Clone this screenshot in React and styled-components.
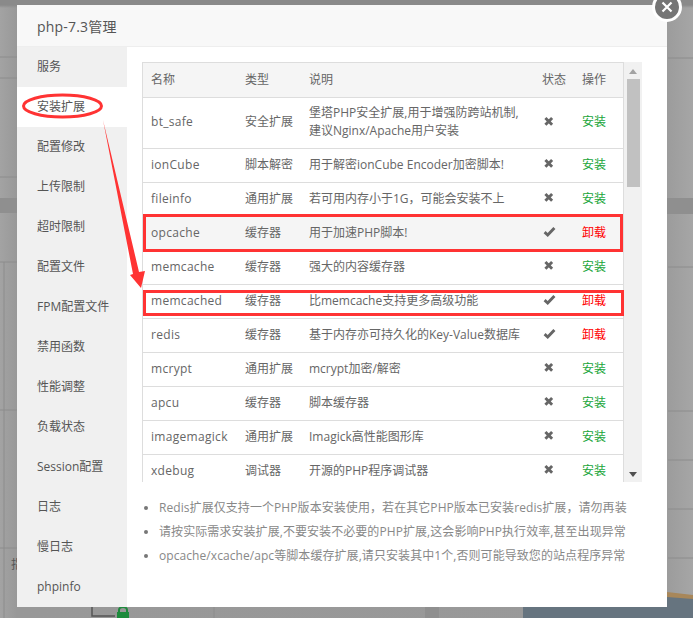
import React from 'react'
import styled, { createGlobalStyle } from 'styled-components'

const GlobalStyle = createGlobalStyle`
  html, body {
    margin: 0;
    padding: 0;
    background: #9c9c9c;
  }
  * {
    box-sizing: border-box;
  }
`

const Page = styled.div`
  position: relative;
  width: 693px;
  height: 618px;
  overflow: hidden;
  padding: 5px 0 0 17px;
  font-family: "Open Sans", "Noto Sans CJK SC", sans-serif;
  font-size: 12px;
  background:
    linear-gradient(180deg, #8a8a8a 0, #8a8a8a 5px, transparent 8px),
    linear-gradient(90deg, #a3a3a3 0, #989898 17px, #999 660px, #a6a6a6 693px);
`

const Backdrop = styled.svg`
  position: absolute;
  left: 0;
  top: 0;
`

const BehindText = styled.span`
  position: absolute;
  left: 11px;
  top: 557px;
  font-size: 12px;
  line-height: 16px;
  color: #555;
`

const Modal = styled.div`
  position: relative;
  width: 650px;
  height: 602px;
  background: #fff;
  display: flex;
  flex-direction: column;
`

const TitleBar = styled.div`
  height: 42px;
  flex: none;
  padding-left: 20px;
  line-height: 43px;
  font-size: 14px;
  letter-spacing: 0.2px;
  color: #555;
  background: #f8f8f8;
  border-bottom: 1px solid #eee;
`

const Body = styled.div`
  flex: 1;
  display: flex;
  min-height: 0;
`

const Sidebar = styled.ul`
  width: 110px;
  flex: none;
  margin: 0;
  padding: 0;
  list-style: none;
  background: #f0f0f0;
`

const NavItem = styled.li`
  height: 40px;
  line-height: 40px;
  padding-left: 20px;
  color: #555;
  background: ${p => (p.$active ? '#fff' : 'transparent')};
`

const Content = styled.div`
  flex: 1;
  padding: 15px 25px 0 15px;
`

const TableBox = styled.div`
  display: flex;
  height: 420px;
`

const TableClip = styled.div`
  width: 482px;
  overflow: hidden;
  border: 1px solid #ddd;
  border-bottom: 0;
`

const Table = styled.table`
  width: 480px;
  table-layout: fixed;
  border-collapse: collapse;
  color: #666;

  col:nth-child(1) { width: 94px; }
  col:nth-child(2) { width: 64px; }
  col:nth-child(3) { width: 233px; }
  col:nth-child(4) { width: 40px; }
  col:nth-child(5) { width: 49px; }
`

const Th = styled.th`
  height: 34px;
  padding: 0 0 2px 8px;
  text-align: left;
  font-weight: 400;
  color: #666;
  background: #f5f5f5;
  border-bottom: 1px solid #ddd;
`

const Row = styled.tr`
  background: ${p => (p.$hover ? '#f5f5f5' : '#fff')};
`

const Td = styled.td`
  height: ${p => (p.$tall ? '51px' : '34px')};
  padding: 0 0 1px 8px;
  line-height: 18px;
  border-bottom: 1px solid #ddd;
`

const NameCell = styled(Td)`
  letter-spacing: 0.3px;
`

const StatusIcon = styled.svg`
  display: block;
  margin: 0 0 2px 1px;
`

const Action = styled.span`
  color: ${p => (p.$danger ? '#f00' : '#20a53a')};
`

const ScrollTrack = styled.div`
  width: 18px;
  flex: none;
  background: #f1f1f1;
  display: flex;
  flex-direction: column;
  align-items: center;
`

const ScrollArrow = styled.div`
  width: 0;
  height: 0;
  margin: 7px 0 0;
  border-left: 4px solid transparent;
  border-right: 4px solid transparent;
  ${p => (p.$down
    ? 'border-top: 5px solid #505050; margin-top: auto; margin-bottom: 5px;'
    : 'border-bottom: 5px solid #a3a3a3;')}
`

const ScrollThumb = styled.div`
  width: 13px;
  height: 108px;
  margin-top: 5px;
  background: #c1c1c1;
`

const Notes = styled.ul`
  margin: 14px 0 0;
  padding: 0 0 0 17px;
  color: #888;
  font-size: 12px;
  line-height: 24px;
  letter-spacing: 0.07px;
  width: 500px;

  li {
    white-space: nowrap;
  }
  li::marker {
    color: #777;
  }
`

const Close = styled.button`
  position: absolute;
  right: -15px;
  top: -13px;
  width: 30px;
  height: 30px;
  padding: 0;
  border: 3px solid #fff;
  border-radius: 50%;
  background: #757575;
  color: #fff;
  display: flex;
  align-items: center;
  justify-content: center;
`

const Annotations = styled.svg`
  position: absolute;
  left: 0;
  top: 0;
  pointer-events: none;
`

const navItems = ['服务', '安装扩展', '配置修改', '上传限制', '超时限制', '配置文件', 'FPM配置文件', '禁用函数', '性能调整', '负载状态', 'Session配置', '日志', '慢日志', 'phpinfo']

const rows = [
  { name: 'bt_safe', type: '安全扩展', desc: <>堡塔PHP安全扩展,用于增强防跨站机制,<br />建议Nginx/Apache用户安装</>, on: false, tall: true },
  { name: 'ionCube', type: '脚本解密', desc: '用于解密ionCube Encoder加密脚本!', on: false },
  { name: 'fileinfo', type: '通用扩展', desc: '若可用内存小于1G，可能会安装不上', on: false },
  { name: 'opcache', type: '缓存器', desc: '用于加速PHP脚本!', on: true, hover: true },
  { name: 'memcache', type: '缓存器', desc: '强大的内容缓存器', on: false },
  { name: 'memcached', type: '缓存器', desc: '比memcache支持更多高级功能', on: true },
  { name: 'redis', type: '缓存器', desc: '基于内存亦可持久化的Key-Value数据库', on: true },
  { name: 'mcrypt', type: '通用扩展', desc: 'mcrypt加密/解密', on: false },
  { name: 'apcu', type: '缓存器', desc: '脚本缓存器', on: false },
  { name: 'imagemagick', type: '通用扩展', desc: 'Imagick高性能图形库', on: false },
  { name: 'xdebug', type: '调试器', desc: '开源的PHP程序调试器', on: false },
]

const notes = [
  'Redis扩展仅支持一个PHP版本安装使用，若在其它PHP版本已安装redis扩展，请勿再装',
  '请按实际需求安装扩展,不要安装不必要的PHP扩展,这会影响PHP执行效率,甚至出现异常',
  'opcache/xcache/apc等脚本缓存扩展,请只安装其中1个,否则可能导致您的站点程序异常',
]

function StateMark({ on }) {
  return (
    <StatusIcon width="13" height="11" viewBox="0 0 13 11">
      <path
        d={on ? 'M1.6 6.2L4.7 9L11.4 2' : 'M2.4 1.9L9.1 8.8M9.1 1.9L2.4 8.8'}
        fill="none"
        stroke="#666"
        strokeWidth="2.9"
      />
    </StatusIcon>
  )
}

export default function App() {
  return (
    <Page>
      <GlobalStyle />
      <Backdrop width="693" height="618" viewBox="0 0 693 618">
        <g stroke="#8c8c8c" strokeWidth="1">
          <path d="M0 57H17M0 78H17M0 177H17M0 262H17M0 410H17M0 548H17M4 262V618" />
          <path d="M668 58H693M668 267H693M668 411H693M668 460H693M668 509H693M668 558H693" />
          <path d="M214 607V618" />
        </g>
        <rect x="0" y="198" width="17" height="15" fill="#8f8f8f" />
        <rect x="667" y="198" width="26" height="16" fill="#8f8f8f" />
        <rect x="425" y="607" width="14" height="11" fill="#8f8f8f" />
        <rect x="523" y="607" width="170" height="11" fill="#66747f" />
        <path d="M667 597H693V618H667Z" fill="#66747f" />
        <path d="M667 592L693 595V599L667 597Z" fill="#a8875a" />
        <path d="M92 607V616H115" fill="none" stroke="#555" strokeWidth="1.5" />
        <path d="M117 618V612H129V618Z" fill="#1d8a3c" />
        <path d="M119 612V610A4 3 0 0 1 127 610V612" fill="none" stroke="#1d8a3c" strokeWidth="2" />
      </Backdrop>
      <BehindText>指</BehindText>

      <Modal>
        <TitleBar>php-7.3管理</TitleBar>
        <Body>
          <Sidebar>
            {navItems.map((item, index) => (
              <NavItem key={item} $active={index === 1}>{item}</NavItem>
            ))}
          </Sidebar>
          <Content>
            <TableBox>
              <TableClip>
                <Table>
                  <colgroup><col /><col /><col /><col /><col /></colgroup>
                  <thead>
                    <tr>
                      <Th>名称</Th>
                      <Th>类型</Th>
                      <Th>说明</Th>
                      <Th>状态</Th>
                      <Th>操作</Th>
                    </tr>
                  </thead>
                  <tbody>
                    {rows.map(row => (
                      <Row key={row.name} $hover={row.hover}>
                        <NameCell $tall={row.tall}>{row.name}</NameCell>
                        <Td>{row.type}</Td>
                        <Td>{row.desc}</Td>
                        <Td><StateMark on={row.on} /></Td>
                        <Td><Action $danger={row.on}>{row.on ? '卸载' : '安装'}</Action></Td>
                      </Row>
                    ))}
                  </tbody>
                </Table>
              </TableClip>
              <ScrollTrack>
                <ScrollArrow />
                <ScrollThumb />
                <ScrollArrow $down />
              </ScrollTrack>
            </TableBox>
            <Notes>
              {notes.map(note => <li key={note}>{note}</li>)}
            </Notes>
          </Content>
        </Body>
        <Close aria-label="close">
          <svg width="12" height="12" viewBox="0 0 12 12">
            <path d="M1.5 1.5L10.5 10.5M10.5 1.5L1.5 10.5" stroke="#fff" strokeWidth="2.2" />
          </svg>
        </Close>
      </Modal>

      <Annotations width="693" height="618" viewBox="0 0 693 618">
        <ellipse cx="62.5" cy="106" rx="39" ry="11" fill="none" stroke="#f33" strokeWidth="3" />
        <path d="M103 120L139 272L145 271L141 288L130 275L133 274Z" fill="#f33" />
        <rect x="144.5" y="215.5" width="477" height="35" fill="none" stroke="#f33" strokeWidth="3" />
        <rect x="144.5" y="291.5" width="478" height="23" fill="none" stroke="#f33" strokeWidth="3" />
      </Annotations>
    </Page>
  )
}
